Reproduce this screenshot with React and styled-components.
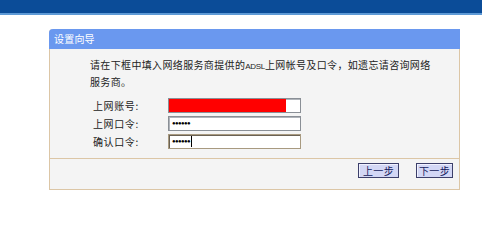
import React from "react";
import styled, { createGlobalStyle } from "styled-components";

const Global = createGlobalStyle`
  html, body { margin: 0; padding: 0; background: #ffffff; }
  body { font-family: "Noto Sans CJK SC", "Liberation Sans", sans-serif; }
`;

const TopBar = styled.div`
  height: 13px;
  background: #0b4c98;
  border-bottom: 2px solid #5e9ad6;
`;

const Page = styled.div`
  padding: 14px 0 0 49px;
`;

const Panel = styled.div`
  width: 411px;
  box-sizing: border-box;
  border: 1px solid #dcc6a6;
  border-top: none;
  border-radius: 4px 4px 0 0;
  background: #f4f4f4;
`;

const Header = styled.div`
  height: 20px;
  margin: 0 -1px;
  background: #6a98ef;
  border-radius: 4px 0 0 0;
  color: #ffffff;
  font-size: 10px;
  line-height: 20px;
  padding-left: 5px;
  letter-spacing: 0.2px;
`;

const Body = styled.div`
  padding: 8px 20px 9px 40px;
  border-bottom: 1px solid #dcc6a6;
`;

const Intro = styled.p`
  margin: 0 0 9px 0;
  font-size: 10px;
  line-height: 15px;
  color: #222;
  letter-spacing: 0.35px;
  width: 345px;
`;

const Small = styled.span`
  font-family: "Liberation Sans", sans-serif;
  font-size: 8px;
  letter-spacing: -0.3px;
`;

const Form = styled.div`
  display: grid;
  grid-template-columns: 75px 133px;
  row-gap: 3px;
  padding-left: 3px;
`;

const Label = styled.div`
  font-size: 10px;
  line-height: 15px;
  color: #222;
  letter-spacing: 0.6px;
`;

const Field = styled.div`
  position: relative;
  height: 15px;
  box-sizing: border-box;
  background: #ffffff;
  border: 1px solid ${(p) => (p.$focus ? "#a89a80" : "#8a8f96")};
  box-shadow: inset 1px 1px 0 ${(p) => (p.$focus ? "#6b6254" : "#b0b4ba")};
  display: flex;
  align-items: center;
  padding-left: 3px;
  overflow: hidden;
`;

const Redact = styled.div`
  position: absolute;
  left: 0;
  top: 0;
  bottom: 0;
  background: #ff0000;
`;

const Dots = styled.span`
  font-family: "Liberation Sans", sans-serif;
  font-size: 6px;
  letter-spacing: -0.6px;
  color: #000;
  line-height: 15px;
`;

const Caret = styled.span`
  display: inline-block;
  width: 1px;
  height: 11px;
  background: #000;
  margin-left: 1px;
`;

const Footer = styled.div`
  display: flex;
  justify-content: flex-end;
  gap: 17px;
  padding: 4px 6px 11px 0;
`;

const Button = styled.div`
  width: ${(p) => p.$w}px;
  height: 15px;
  box-sizing: border-box;
  background: #d3d7f5;
  border: 1px solid #3c3f6a;
  box-shadow: inset 1px 1px 0 #f0f1ff;
  color: #141a5c;
  font-size: 10px;
  line-height: 13px;
  text-align: center;
  letter-spacing: 0.3px;
`;

export default function App() {
  return (
    <>
      <Global />
      <TopBar />
      <Page>
        <Panel>
          <Header>设置向导</Header>
          <Body>
            <Intro>
              请在下框中填入网络服务商提供的<Small>ADSL</Small>上网帐号及口令，如遗忘请咨询网络服务商。
            </Intro>
            <Form>
              <Label>上网账号:</Label>
              <Field>
                <Redact style={{ width: "117px" }} />
              </Field>
              <Label>上网口令:</Label>
              <Field>
                <Dots>●●●●●●</Dots>
              </Field>
              <Label>确认口令:</Label>
              <Field $focus>
                <Dots>●●●●●●</Dots>
                <Caret />
              </Field>
            </Form>
          </Body>
          <Footer>
            <Button $w={41}>上一步</Button>
            <Button $w={37}>下一步</Button>
          </Footer>
        </Panel>
      </Page>
    </>
  );
}
